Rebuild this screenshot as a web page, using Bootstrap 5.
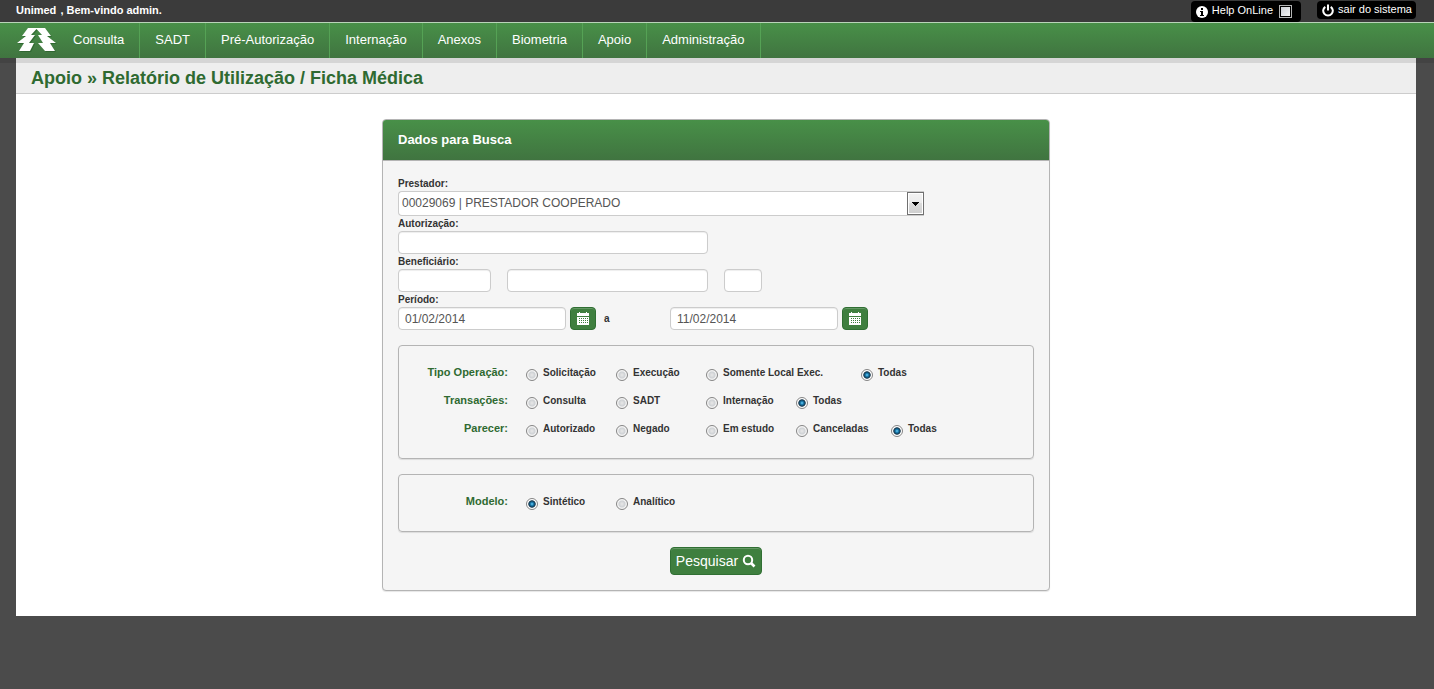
<!DOCTYPE html>
<html lang="pt-BR">
<head>
<meta charset="utf-8">
<meta name="viewport" content="width=device-width, initial-scale=1">
<title>Relatório de Utilização / Ficha Médica</title>
<link rel="stylesheet" href="https://cdn.jsdelivr.net/npm/bootstrap@5.3.0/dist/css/bootstrap.min.css">
<style>
body{background:#4b4b4b;font-family:"Liberation Sans",Arial,sans-serif;font-size:11px;line-height:15px;color:#333}
.topo{background:#3b3b3b;min-height:22px;padding:0 18px 0 16px;color:#fff}
.saudacao{padding-top:2px;line-height:16px}
.saudacao span{margin-right:1px}
.pilula{background:#000;color:#fff;border:0;border-radius:4px;text-decoration:none;height:18px;margin-top:1px}
.pilula:hover{color:#fff}
.pilula .rotulo{line-height:16px}
.pilula svg{margin-top:3px}
.pilula.ajuda{height:21px;padding:0 9px 0 5px;gap:4px}
.ajuda .rotulo{line-height:18px}
.pilula.ajuda svg{margin-top:5px}
.pilula.sair{padding:0 4px 0 5px;gap:4px}
.ajuda input{appearance:none;width:13px;height:13px;margin:4px 0 0 2px;border:1px solid #b4b5b5;background:linear-gradient(135deg,#cbcfd5,#f6f6f6) content-box #fff;padding:1px}
.menu{background:linear-gradient(#489048,#407440);border-top:1px solid #b9d4b9;min-height:36px;padding:0 16px;box-shadow:0 5px 0 rgba(0,0,0,.1);z-index:2}
.menu .nav-link{color:#fff;font-size:13px;line-height:19px;padding:7px 15px 9px;border-right:1px solid #55a255}
.conteudo{background:#fff;margin:0 18px 0 16px;padding-bottom:25px}
.titulo{background:#eee;border-bottom:1px solid #ccc;color:#2f6a31;font-size:18px;font-weight:bold;line-height:20px;padding:10px 15px 5px}
.painel{width:668px;max-width:100%;margin:25px auto 0;border:1px solid #b4b4b4;border-radius:4px;background:#f5f5f5;box-shadow:0 1px 1px rgba(0,0,0,.1)}
.painel-topo{background:linear-gradient(#489048,#407440);border-bottom:1px solid #b4b4b4;border-radius:3px 3px 0 0;color:#fff;font-size:13px;font-weight:bold;line-height:20px;padding:10px 15px}
.painel-corpo{padding:15px}
.campo-rotulo{display:block;font-size:10px;font-weight:bold;line-height:15px}
.campo{height:23px;min-height:0;padding:0 6px;font-size:12px;line-height:21px;color:#555;border:1px solid #ccc;border-radius:4px;box-shadow:inset 0 1px 1px rgba(0,0,0,.07)}
.lista{height:25px;width:526px;max-width:100%;padding:0 20px 2px 3px;font-size:12px;line-height:20px;color:#555;border:1px solid #ccc;border-right:0;border-radius:4px 0 0 4px;background:#fff url("data:image/svg+xml,%3Csvg xmlns='http://www.w3.org/2000/svg' width='17' height='23'%3E%3Cdefs%3E%3ClinearGradient id='g' x2='0' y2='1'%3E%3Cstop stop-color='%23f2f2f2'/%3E%3Cstop offset='.48' stop-color='%23ebebeb'/%3E%3Cstop offset='.5' stop-color='%23dcdcdc'/%3E%3Cstop offset='1' stop-color='%23cfcfcf'/%3E%3C/linearGradient%3E%3C/defs%3E%3Crect x='.5' y='.5' width='16' height='22' fill='%23fff' stroke='%23707070'/%3E%3Crect x='2' y='2' width='13' height='19' fill='url(%23g)'/%3E%3Cpath d='M5 10h7v1h-1v1h-1v1H9v1H8v-1H7v-1H6v-1H5z'/%3E%3C/svg%3E") no-repeat right top;background-origin:padding-box;appearance:none}
.l-carteira{width:93px}.l-nome{width:201px}.l-digito{width:38px}.l-data{width:168px}.l-autorizacao{width:310px}
.btn-verde{background:#3f7f3f;border:1px solid #306f33;border-radius:4px;color:#fff;box-shadow:inset 0 1px 0 rgba(255,255,255,.2)}
.btn-verde:hover{background:#356f35;color:#fff}
.btn-data{width:26px;height:23px;padding:0;margin:0 8px 0 4px}
.btn-busca{font-size:14px;line-height:20px;height:28px;padding:3px 5px}
.acoes{padding-top:15px}
.ate{width:66px;font-size:10px;font-weight:bold}
.grupo{border:1px solid #b4b4b4;border-radius:4px;padding:12px 0 16px;margin-top:15px;box-shadow:0 1px 1px rgba(0,0,0,.1)}
.linha{height:28px}
.linha-titulo{width:109px;margin-right:18px;text-align:right;color:#2f6a31;font-weight:bold;line-height:29px}
.opcao{width:90px}
.opcao.media{width:95px}
.opcao.larga{width:155px}
.opcao label{font-size:10px;font-weight:bold;line-height:16px;margin-top:7px;white-space:nowrap}
.opcao input{appearance:none;flex:none;width:12px;height:12px;margin:11px 5px 0 0;border:1px solid #858585;border-radius:50%;background:radial-gradient(circle 6px at 50% 50%,#e8e8e8 0,#cfd2d5 50%,#f4f4f4 70%) border-box}
.opcao input:checked{background:radial-gradient(circle 6px at 50% 50%,#7fd8f8 0,#1c86bd 22%,#123247 55%,#fff 68%) border-box}
</style>
</head>
<body>
<header class="topo d-flex justify-content-between align-items-start">
  <strong class="saudacao"><span>Unimed</span> , Bem-vindo admin.</strong>
  <div class="d-flex align-items-start gap-3">
    <label class="pilula ajuda d-flex align-items-start" for="ajuda">
      <svg width="12" height="12" viewBox="0 0 12 12" aria-hidden="true"><circle cx="6" cy="6" r="6" fill="#fff"/><path d="M5 2h2v2H5zM4 5h3v4h1v1H4V9h1V6H4z" fill="#000"/></svg>
      <span class="rotulo">Help OnLine</span>
      <input type="checkbox" id="ajuda">
    </label>
    <a href="#" class="pilula sair d-flex align-items-start">
      <svg width="12" height="13" viewBox="0 0 12 13" fill="none" stroke="#fff" stroke-width="2" aria-hidden="true"><path d="M3.3 2.8A4.8 4.8 0 1 0 8.700 2.800M6 .5v6"/></svg>
      <span class="rotulo">sair do sistema</span>
    </a>
  </div>
</header>
<nav class="menu d-flex position-relative" aria-label="Menu principal">
  <a href="#" aria-label="Unimed" class="d-block">
    <svg width="42" height="28" viewBox="0 0 42 28" class="mt-1" aria-hidden="true">
      <defs><path id="pinheiros" d="M12 1H29L35 9H31L40 16H34L39 24H29L22 16H27L22 8H26L20.500 2L15 8H19L13 16H18L14 24H3L8 16H1L10 9H6z"/></defs>
      <use href="#pinheiros" x="1" y="1" fill="#245a27" opacity=".6"/>
      <use href="#pinheiros" fill="#fff"/>
    </svg>
  </a>
  <ul class="nav flex-grow-1">
    <li class="nav-item"><a class="nav-link" href="#">Consulta</a></li>
    <li class="nav-item"><a class="nav-link" href="#">SADT</a></li>
    <li class="nav-item"><a class="nav-link" href="#">Pré-Autorização</a></li>
    <li class="nav-item"><a class="nav-link" href="#">Internação</a></li>
    <li class="nav-item"><a class="nav-link" href="#">Anexos</a></li>
    <li class="nav-item"><a class="nav-link" href="#">Biometria</a></li>
    <li class="nav-item"><a class="nav-link" href="#">Apoio</a></li>
    <li class="nav-item"><a class="nav-link" href="#">Administração</a></li>
  </ul>
</nav>
<main class="conteudo">
  <h1 class="titulo m-0">Apoio » Relatório de Utilização / Ficha Médica</h1>
  <form class="painel">
    <h2 class="painel-topo m-0">Dados para Busca</h2>
    <div class="painel-corpo">
      <label class="campo-rotulo" for="prestador">Prestador:</label>
      <select class="lista d-block" id="prestador"><option>00029069 | PRESTADOR COOPERADO</option></select>
      <label class="campo-rotulo" for="autorizacao">Autorização:</label>
      <input class="form-control campo l-autorizacao" id="autorizacao" type="text">
      <label class="campo-rotulo" for="beneficiario">Beneficiário:</label>
      <div class="d-flex gap-3">
        <input class="form-control campo l-carteira" id="beneficiario" type="text">
        <input class="form-control campo l-nome" type="text" aria-label="Nome do beneficiário">
        <input class="form-control campo l-digito" type="text" aria-label="Dígito">
      </div>
      <label class="campo-rotulo" for="inicio">Período:</label>
      <div class="d-flex align-items-center">
        <input class="form-control campo l-data" id="inicio" type="text" value="01/02/2014">
        <button type="button" class="btn btn-verde btn-data d-flex justify-content-center align-items-center" aria-label="Escolher data inicial"><svg width="12" height="13" viewBox="0 0 12 13" fill="#fff" shape-rendering="crispEdges" aria-hidden="true"><path d="M2 0h1v1h6V0h1v1h2v3H0V1h2zM0 5h12v8H0z"/><path stroke="#3f7f3f" stroke-dasharray="1 1" d="M2 6.500h9M2 8.500h9M2 10.500h9"/></svg></button>
        <label class="ate" for="fim">a</label>
        <input class="form-control campo l-data" id="fim" type="text" value="11/02/2014">
        <button type="button" class="btn btn-verde btn-data d-flex justify-content-center align-items-center" aria-label="Escolher data final"><svg width="12" height="13" viewBox="0 0 12 13" fill="#fff" shape-rendering="crispEdges" aria-hidden="true"><path d="M2 0h1v1h6V0h1v1h2v3H0V1h2zM0 5h12v8H0z"/><path stroke="#3f7f3f" stroke-dasharray="1 1" d="M2 6.500h9M2 8.500h9M2 10.500h9"/></svg></button>
      </div>
      <div class="grupo">
        <div class="linha d-flex" role="radiogroup" aria-labelledby="t-op"><span class="linha-titulo" id="t-op">Tipo Operação:</span>
          <div class="opcao d-flex align-items-start"><input type="radio" name="op" id="op1"><label for="op1">Solicitação</label></div>
          <div class="opcao d-flex align-items-start"><input type="radio" name="op" id="op2"><label for="op2">Execução</label></div>
          <div class="opcao larga d-flex align-items-start"><input type="radio" name="op" id="op3"><label for="op3">Somente Local Exec.</label></div>
          <div class="opcao d-flex align-items-start"><input type="radio" name="op" id="op4" checked><label for="op4">Todas</label></div>
        </div>
        <div class="linha d-flex" role="radiogroup" aria-labelledby="t-tr"><span class="linha-titulo" id="t-tr">Transações:</span>
          <div class="opcao d-flex align-items-start"><input type="radio" name="tr" id="tr1"><label for="tr1">Consulta</label></div>
          <div class="opcao d-flex align-items-start"><input type="radio" name="tr" id="tr2"><label for="tr2">SADT</label></div>
          <div class="opcao d-flex align-items-start"><input type="radio" name="tr" id="tr3"><label for="tr3">Internação</label></div>
          <div class="opcao d-flex align-items-start"><input type="radio" name="tr" id="tr4" checked><label for="tr4">Todas</label></div>
        </div>
        <div class="linha d-flex" role="radiogroup" aria-labelledby="t-pa"><span class="linha-titulo" id="t-pa">Parecer:</span>
          <div class="opcao d-flex align-items-start"><input type="radio" name="pa" id="pa1"><label for="pa1">Autorizado</label></div>
          <div class="opcao d-flex align-items-start"><input type="radio" name="pa" id="pa2"><label for="pa2">Negado</label></div>
          <div class="opcao d-flex align-items-start"><input type="radio" name="pa" id="pa3"><label for="pa3">Em estudo</label></div>
          <div class="opcao media d-flex align-items-start"><input type="radio" name="pa" id="pa4"><label for="pa4">Canceladas</label></div>
          <div class="opcao d-flex align-items-start"><input type="radio" name="pa" id="pa5" checked><label for="pa5">Todas</label></div>
        </div>
      </div>
      <div class="grupo">
        <div class="linha d-flex" role="radiogroup" aria-labelledby="t-mo"><span class="linha-titulo" id="t-mo">Modelo:</span>
          <div class="opcao d-flex align-items-start"><input type="radio" name="mo" id="mo1" checked><label for="mo1">Sintético</label></div>
          <div class="opcao d-flex align-items-start"><input type="radio" name="mo" id="mo2"><label for="mo2">Analítico</label></div>
        </div>
      </div>
      <div class="acoes d-flex justify-content-center">
        <button type="submit" class="btn btn-verde btn-busca d-flex align-items-center gap-1">Pesquisar <svg width="14" height="14" viewBox="0 0 14 14" fill="none" stroke="#fff" aria-hidden="true"><circle cx="6" cy="6" r="4.200" stroke-width="2"/><path d="M9 9l3.500 3.500" stroke-width="2.600"/></svg></button>
      </div>
    </div>
  </form>
</main>
<script src="https://cdn.jsdelivr.net/npm/bootstrap@5.3.0/dist/js/bootstrap.bundle.min.js"></script>
</body>
</html>
